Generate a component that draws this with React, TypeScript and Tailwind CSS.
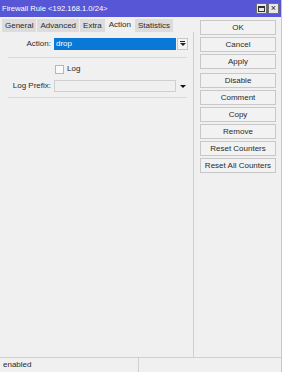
import React from "react";

const font = { fontFamily: '"Liberation Sans", Arial, sans-serif' };

function Btn({ label }: { label: string }) {
  return (
    <div className="h-[15px] w-[76px] border border-[#c8c8c8] bg-[#f2f2f2] flex items-center justify-center text-[8px] text-[#2a2a2a] leading-none">
      {label}
    </div>
  );
}

export default function App() {
  const tabs = ["General", "Advanced", "Extra", "Action", "Statistics"];
  return (
    <div className="w-[282px] h-[372px] bg-[#f0f0f0] flex flex-col border-r border-[#c8c8c8] overflow-hidden" style={font}>
      <div className="h-[17px] bg-[#5656d6] flex items-center justify-between pl-[2px] pr-[2px] shrink-0">
        <span className="text-white text-[7.6px] leading-none">Firewall Rule &lt;192.168.1.0/24&gt;</span>
        <div className="flex gap-[1px]">
          <div className="w-[11px] h-[11px] bg-[#e8e8e8] border border-[#707070] flex items-center justify-center">
            <div className="w-[7px] h-[6px] border border-[#333] border-t-2" />
          </div>
          <div className="w-[11px] h-[11px] bg-[#e8e8e8] border border-[#707070] flex items-center justify-center text-[9px] leading-none text-[#222]">
            ×
          </div>
        </div>
      </div>
      <div className="flex flex-1 min-h-0">
        <div className="w-[194px] flex flex-col pl-[2px]">
          <div className="flex h-[14px] mt-[1px] items-end gap-[1px]">
            {tabs.map((t) => (
              <div
                key={t}
                className={
                  t === "Action"
                    ? "h-[14px] px-[3px] bg-[#f0f0f0] flex items-center text-[8px] text-[#2a2a2a] leading-none"
                    : "h-[13px] px-[3px] bg-[#dcdcdc] flex items-center text-[8px] text-[#2a2a2a] leading-none"
                }
              >
                {t}
              </div>
            ))}
          </div>
          <div className="flex-1 border-r border-[#d0d0d0] flex flex-col pr-[4px]">
            <div className="flex items-center h-[13px] mt-[5px]">
              <span className="w-[50px] text-right text-[8px] text-[#2a2a2a] pr-[1px] leading-none">Action:</span>
              <div className="ml-[2px] w-[122px] h-[12px] bg-[#0a78d6] flex items-center px-[2px] text-white text-[8px] leading-none">drop</div>
              <div className="ml-[1px] w-[11px] h-[12px] border border-[#c8c8c8] bg-[#f4f4f4] flex flex-col items-center justify-center">
                <div className="w-[5px] h-[1px] bg-[#222] mb-[1px]" />
                <div className="w-0 h-0 border-l-[3px] border-r-[3px] border-t-[3px] border-l-transparent border-r-transparent border-t-[#222]" />
              </div>
            </div>
            <div className="h-[1px] bg-[#d8d8d8] mt-[7px] ml-[6px] mr-[2px]" />
            <div className="flex items-center h-[10px] mt-[6px] pl-[53px]">
              <div className="w-[9px] h-[9px] border border-[#b8b8b8] bg-[#fafafa]" />
              <span className="ml-[3px] text-[8px] text-[#2a2a2a] leading-none">Log</span>
            </div>
            <div className="flex items-center h-[12px] mt-[6px]">
              <span className="w-[50px] text-right text-[8px] text-[#2a2a2a] pr-[1px] leading-none">Log Prefix:</span>
              <div className="ml-[2px] w-[122px] h-[12px] border border-[#cfcfcf] bg-[#f0f0f0]" />
              <div className="ml-[4px] w-0 h-0 border-l-[3px] border-r-[3px] border-t-[3px] border-l-transparent border-r-transparent border-t-[#111]" />
            </div>
            <div className="h-[1px] bg-[#d8d8d8] mt-[5px] ml-[6px] mr-[2px]" />
          </div>
        </div>
        <div className="flex-1 flex flex-col pl-[6px] pt-[3px]">
          <div className="flex flex-col gap-[2px]">
            <Btn label="OK" />
            <Btn label="Cancel" />
            <Btn label="Apply" />
          </div>
          <div className="flex flex-col gap-[2px] mt-[4px]">
            <Btn label="Disable" />
            <Btn label="Comment" />
            <Btn label="Copy" />
            <Btn label="Remove" />
            <Btn label="Reset Counters" />
            <Btn label="Reset All Counters" />
          </div>
        </div>
      </div>
      <div className="h-[15px] border-t border-[#d0d0d0] flex shrink-0">
        <div className="w-[139px] border-r border-[#d0d0d0] flex items-center pl-[3px] text-[8px] text-[#2a2a2a] leading-none">enabled</div>
        <div className="flex-1" />
      </div>
    </div>
  );
}
